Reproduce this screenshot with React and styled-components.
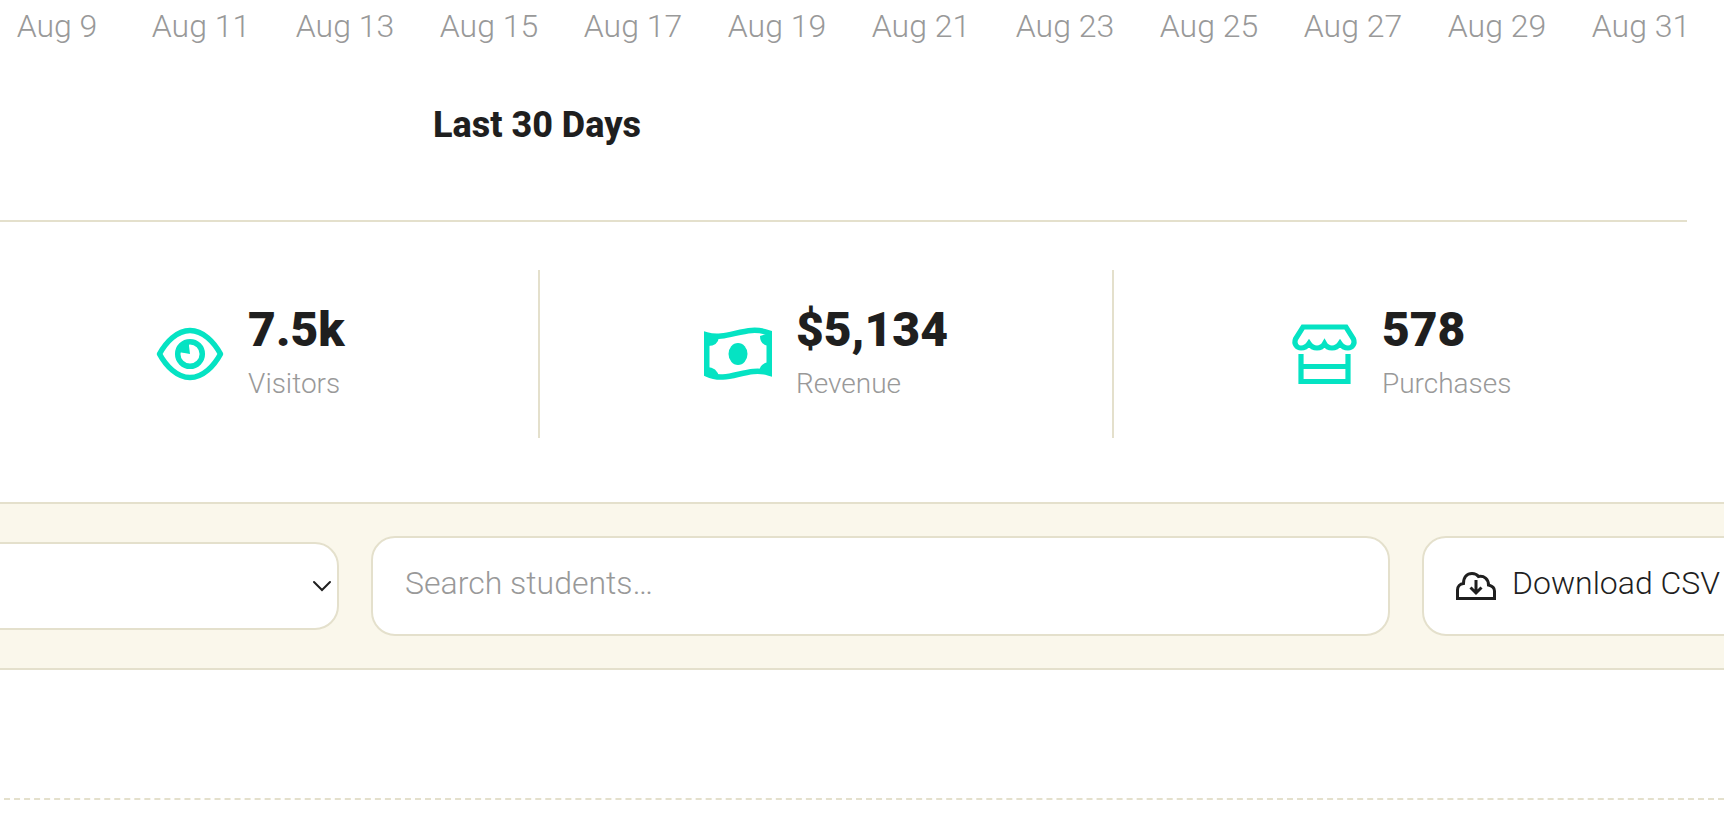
import React from "react";
import styled, { createGlobalStyle } from "styled-components";

const GlobalStyle = createGlobalStyle`
  * {
    box-sizing: border-box;
  }

  body {
    margin: 0;
    overflow-x: hidden;
    background: #fff;
    color: #1f1f1f;
    font-family: Roboto, "Liberation Sans", sans-serif;
    font-size: 32px;
    font-weight: 350;
  }
`;

const Page = styled.main`
  overflow: hidden;
`;

const Axis = styled.ol`
  display: grid;
  grid-template-columns: repeat(12, 1fr);
  margin: 0 11px 0 -15px;
  padding: 6px 0 0;
  list-style: none;
  color: #999;
  line-height: 40px;
  text-align: center;
  white-space: nowrap;
`;

const Panel = styled.section`
  margin-right: 37px;
`;

const Title = styled.h2`
  margin: 0 0 0 -613px;
  padding: 56px 0 72px;
  border-bottom: 2px solid #e4e0cc;
  font-size: 36px;
  font-weight: 800;
  line-height: 46px;
  text-align: center;
`;

const Stats = styled.div`
  display: grid;
  grid-template-columns: repeat(3, 1fr);
  margin-left: -37px;
  padding: 48px 0 64px;
`;

const Stat = styled.div`
  display: flex;
  align-items: center;
  justify-content: center;
  gap: 24px;
  height: 168px;
  border-left: ${({ $first }) => ($first ? "0" : "2px solid #e4e0cc")};

  svg {
    flex: none;
    color: #05e3c3;
  }
`;

const StatValue = styled.div`
  font-size: 48px;
  font-weight: 900;
  line-height: 60px;
`;

const StatLabel = styled.div`
  color: #999;
  font-size: 28px;
  line-height: 48px;
`;

const Toolbar = styled.form`
  display: flex;
  align-items: center;
  gap: 32px;
  margin: 0 -30px 0 -32px;
  padding: 32px 0;
  border: solid #e4e0cc;
  border-width: 2px 0;
  background: #faf7eb;
`;

const SelectBox = styled.div`
  position: relative;
  flex: none;
  width: 371px;

  svg {
    position: absolute;
    top: 50%;
    right: 7px;
    transform: translateY(-50%);
    pointer-events: none;
  }
`;

const Select = styled.select`
  display: block;
  width: 100%;
  height: 88px;
  padding: 0 48px 0 32px;
  border: 2px solid #e4e0cc;
  border-radius: 24px;
  appearance: none;
  background: #fff;
  color: inherit;
  font: inherit;
`;

const SearchInput = styled.input`
  flex: 1;
  min-width: 0;
  height: 100px;
  padding: 0 32px 6px;
  border: 2px solid #e4e0cc;
  border-radius: 24px;
  background: #fff;
  color: inherit;
  font: inherit;

  &::placeholder {
    color: #999;
    opacity: 1;
  }
`;

const DownloadButton = styled.button`
  display: flex;
  flex: none;
  align-items: center;
  gap: 16px;
  height: 100px;
  padding: 0 32px;
  border: 2px solid #e4e0cc;
  border-radius: 24px;
  background: #fff;
  color: inherit;
  font: inherit;
  white-space: nowrap;

  span {
    padding-bottom: 6px;
  }
`;

const Students = styled.section`
  margin-left: -6px;
  padding-top: 128px;
  border-bottom: 2px dashed #e4e0cc;
`;

const EyeIcon = () => (
  <svg width="68" height="68" viewBox="0 0 68 68" fill="none" stroke="currentColor" strokeWidth="5.5">
    <path d="M3.5 34C10 22 21 10.5 34 10.5S58 22 64.5 34C58 46 47 57.5 34 57.5S10 46 3.5 34Z" strokeLinejoin="round" />
    <circle cx="34" cy="34" r="12.3" />
    <path d="M23 32L34 34L32.500 22Z" fill="currentColor" stroke="none" />
    <path d="M24 32L26 25L33 23V33Z" fill="currentColor" stroke="none" />
  </svg>
);

const BanknoteIcon = () => (
  <svg width="68" height="68" viewBox="0 0 68 68" fill="none" stroke="currentColor" strokeWidth="5.5">
    <path d="M2.75 15C24 21 42 4 65.25 13V53C42 46 24 64 2.75 54Z" />
    <ellipse cx="34" cy="34" rx="9.5" ry="11" fill="currentColor" stroke="none" />
    <path d="M3 14l12 3q-1 9-11 9ZM65 13v13q-9-1-9-10ZM3 47q10 0 12 10L3 55ZM65 42q-9 1-10 10l10 2Z" fill="currentColor" stroke="none" />
  </svg>
);

const StoreIcon = () => (
  <svg width="68" height="68" viewBox="0 0 68 68" fill="none" stroke="currentColor" strokeWidth="5.2">
    <path d="M13 7H56L63.500 19C65.500 24 62 28 58 28Q53 28 50 23.500Q47 28 42 28Q37 28 34.500 23.500Q32 28 27 28Q22 28 19 23.500Q16 28 11 28C7 28 3.500 24 5.500 19Z" />
    <path d="M11 34V61.500H58V34M11 46.500H58" />
  </svg>
);

const CloudIcon = () => (
  <svg width="40" height="40" viewBox="0 0 40 40" fill="none" stroke="currentColor" strokeWidth="3">
    <path d="M1.5 32.5V24C1.5 20.5 4 18 7.5 17.5C7.5 11 11 7.5 16 7.5C19 7.5 21 8.5 22.5 10.5C28 9.5 32.5 13 32.5 19C36.5 20 38.5 22 38.5 25V32.5Z" />
    <path d="M20 14V27M14.5 21.5L20 27L25.5 21.5" />
  </svg>
);

const ChevronIcon = () => (
  <svg width="20" height="20" viewBox="0 0 20 20" fill="none" stroke="currentColor" strokeWidth="2">
    <path d="M2 6L10 14L18 6" strokeLinecap="round" />
  </svg>
);

const days = [9, 11, 13, 15, 17, 19, 21, 23, 25, 27, 29, 31];

const stats = [
  { value: "7.5k", label: "Visitors", Icon: EyeIcon },
  { value: "$5,134", label: "Revenue", Icon: BanknoteIcon },
  { value: "578", label: "Purchases", Icon: StoreIcon },
];

const App = () => {
  return (
    <>
      <GlobalStyle />
      <Page>
        <Axis>
          {days.map((day) => (
            <li key={day}>Aug {day}</li>
          ))}
        </Axis>
        <Panel>
          <Title>Last 30 Days</Title>
          <Stats>
            {stats.map(({ value, label, Icon }, index) => (
              <Stat key={label} $first={index === 0}>
                <Icon />
                <div>
                  <StatValue>{value}</StatValue>
                  <StatLabel>{label}</StatLabel>
                </div>
              </Stat>
            ))}
          </Stats>
        </Panel>
        <Toolbar onSubmit={(e) => e.preventDefault()}>
          <SelectBox>
            <Select aria-label="Filter">
              <option value=""></option>
            </Select>
            <ChevronIcon />
          </SelectBox>
          <SearchInput type="search" aria-label="Search students" placeholder="Search students…" />
          <DownloadButton type="button">
            <CloudIcon />
            <span>Download CSV</span>
          </DownloadButton>
        </Toolbar>
        <Students />
      </Page>
    </>
  );
};

export default App;
